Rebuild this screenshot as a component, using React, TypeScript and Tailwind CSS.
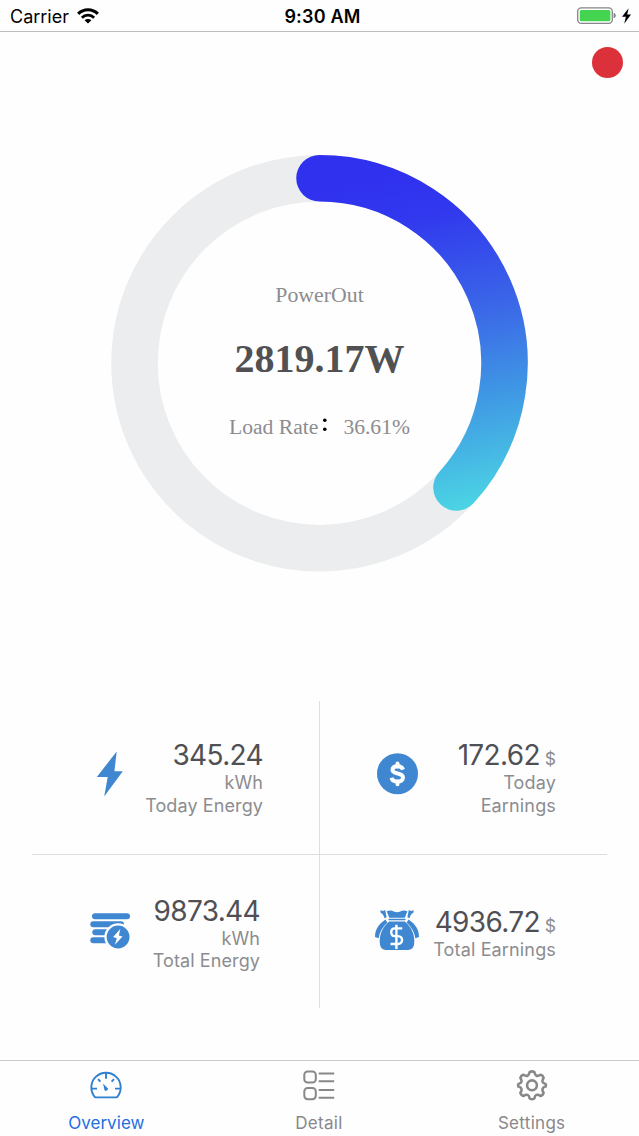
import React from "react";

const BLUE = "#3f87d0";

function WifiIcon() {
  return (
    <svg className="ml-[8px] mt-[8px] h-[16px] w-[22px]" viewBox="0 0 22 16" fill="none" stroke="#000" strokeWidth="3.2">
      <path d="M1.2 5.9A13.6 13.6 0 0 1 20.8 5.9" />
      <path d="M4.9 9.7A8.5 8.5 0 0 1 17.1 9.7" strokeWidth="2.9" />
      <path d="M11 15.6L7.6 12.3A4.8 4.8 0 0 1 14.4 12.3Z" fill="#000" stroke="none" />
    </svg>
  );
}

function BatteryIcon() {
  return (
    <svg className="mt-[6px] h-[20px] w-[56px]" viewBox="0 0 56 20">
      <rect x="1.7" y="1.8" width="34.6" height="15.6" rx="3.6" fill="#fff" stroke="#85858a" strokeWidth="1.3" />
      <rect x="3.8" y="3.9" width="30.6" height="11.4" rx="1.6" fill="#44d450" />
      <path d="M37.6 6.8c1.6.5 2.2 1.6 2.2 2.8s-.6 2.3-2.2 2.8z" fill="#85858a" />
      <path d="M52.6 2.2L46 10.8H49.9L48.2 17.8L55 8.6H51.2Z" fill="#000" />
    </svg>
  );
}

function StatusBar() {
  return (
    <header className="grid h-[32px] grid-cols-3 border-b border-[#bdbcc1] text-[18px] leading-[33px] text-black">
      <div className="flex pl-[10px]">
        <span>Carrier</span>
        <WifiIcon />
      </div>
      <div className="pl-[6px] text-center font-semibold tracking-[0.2px]">9:30 AM</div>
      <div className="flex justify-end pr-[7px]">
        <BatteryIcon />
      </div>
    </header>
  );
}

function Gauge() {
  return (
    <div className="mx-auto grid h-[418px] w-[417px]">
      <svg className="col-start-1 row-start-1 h-[418px] w-[417px]" viewBox="0 0 417 418" fill="none">
        <defs>
          <linearGradient id="power" gradientUnits="userSpaceOnUse" x1="190" y1="0" x2="262" y2="370">
            <stop offset="0.08" stopColor="#3030ef" />
            <stop offset="0.22" stopColor="#3138ee" />
            <stop offset="0.5" stopColor="#3b68e8" />
            <stop offset="0.72" stopColor="#3f97e4" />
            <stop offset="1" stopColor="#4bd3e4" />
          </linearGradient>
        </defs>
        <circle cx="208.5" cy="209.2" r="185" stroke="#ebedef" strokeWidth="46.5" />
        <path d="M208.5 24.2A185 185 0 0 1 345.5 333.5" stroke="url(#power)" strokeWidth="46.5" strokeLinecap="round" />
      </svg>
      <div className="col-start-1 row-start-1 flex flex-col items-center pt-[127px] font-['Liberation_Serif',serif] text-[#8c8c90]">
        <div className="h-[28px] text-[21.8px] leading-[28px]">PowerOut</div>
        <div className="mt-[25px] h-[50px] text-[40px] font-bold leading-[50px] text-[#515154]">2819.17W</div>
        <div className="mt-[29px] flex h-[28px] text-[21.6px] leading-[28px]">
          <span>Load Rate</span>
          <svg className="mx-[2px] h-[28px] w-[21px]" viewBox="0 0 21 28" fill="#000">
            <circle cx="4.8" cy="7.3" r="1.8" />
            <circle cx="4.8" cy="16.2" r="1.8" />
          </svg>
          <span>36.61%</span>
        </div>
      </div>
    </div>
  );
}

function BoltIcon() {
  return (
    <svg className="h-[46px] w-[28px]" viewBox="0 0 28 46" fill={BLUE}>
      <path d="M20.7 .5L.8 26H11.7L8.2 45.5L26.8 20.3H18.4Z" />
    </svg>
  );
}

function CoinIcon() {
  return (
    <svg className="h-[42px] w-[42px]" viewBox="0 0 42 42" fill="none">
      <circle cx="20.5" cy="20.7" r="20.5" fill={BLUE} />
      <g transform="translate(-0.5 0)">
        <path d="M26.5 16.6C25.9 14.4 23.9 13.2 21 13.2C17.9 13.2 16 14.6 16 16.8C16 22.2 26.5 18.9 26.5 24.6C26.5 27.1 24.3 28.6 21 28.6C17.8 28.6 15.6 27.2 15 24.8" stroke="#fff" strokeWidth="4" />
        <path d="M21 10.5V13.6M21 28.4V31.3" stroke="#fff" strokeWidth="4" strokeLinecap="round" />
      </g>
    </svg>
  );
}

function StackIcon() {
  return (
    <svg className="h-[38px] w-[42px]" viewBox="0 0 42 38" fill="none">
      <g stroke={BLUE} strokeWidth="6" strokeLinecap="round">
        <path d="M5 4.2H37" />
        <path d="M3.3 12.2H31" />
        <path d="M5.3 20.2H24" />
        <path d="M3.3 28.2H20" />
      </g>
      <circle cx="28.1" cy="25" r="12.6" fill={BLUE} stroke="#fefefe" strokeWidth="2.3" />
      <path d="M30.3 17.1L23.1 25.1L26.8 26.3L24.9 32.8L32.5 24.6L28.9 23.4Z" fill="#fff" />
    </svg>
  );
}

function BagIcon() {
  return (
    <svg className="h-[42px] w-[46px]" viewBox="0 0 46 42" fill="none">
      <path d="M11.5 10.5C4 15.5 1 21 1 28L4.7 29.2C5.5 23.4 8.2 18.7 13.3 13.6ZM34.5 10.5C42 15.5 45 21 45 28L41.3 29.2C40.5 23.4 37.8 18.7 32.7 13.6Z" fill={BLUE} />
      <path d="M6.3 1.2L9 2.1L11.2 1L12.6 8.2L10.5 9.3C9.7 6.3 8.6 4.5 6.7 4ZM39.7 1.2L37 2.1L34.8 1L33.4 8.2L35.5 9.3C36.3 6.3 37.4 4.5 39.3 4Z" fill={BLUE} />
      <path d="M12.7 2.2C15.7 1 17.7 1.2 19.8 2.4C22 3.5 24 3.5 26.3 2.4C28.4 1.2 30.5 1 33.4 2.2L30.8 8.7H15.3Z" fill={BLUE} />
      <path d="M15.2 10.5H30.8" stroke={BLUE} strokeWidth="1.5" strokeLinecap="round" />
      <path d="M15.2 12.4H30.8C36.5 17 40.3 24 40.3 32C40.3 38.8 38.2 41 32.5 41H13.5C7.8 41 5.7 38.8 5.7 32C5.7 24 9.5 17 15.2 12.4Z" fill={BLUE} />
      <path d="M28.2 19.4H20.8C16.1 19.4 16.1 27.1 20.8 27.1H24C29.4 27.1 29.4 35 24 35H16.5M22.4 15.7V40" stroke="#fff" strokeWidth="2.4" />
    </svg>
  );
}

function Value({ children }: { children: React.ReactNode }) {
  return <div className="h-[34px] whitespace-nowrap text-[28px] leading-[35px] tracking-[-0.65px] text-[#505054]">{children}</div>;
}

function Dollar() {
  return <span className="text-[17.5px] tracking-normal text-[#8c8c90]"> $</span>;
}

function Stats() {
  return (
    <section className="mx-[32px] grid h-[307px] grid-cols-[288px_287px] grid-rows-[154px_153px] text-[18px] leading-[22.5px] text-[#8c8c90]">
      <div className="flex justify-between border-b border-r border-[#dedee0] pl-[64px] pr-[56px]">
        <div className="pt-[50px]"><BoltIcon /></div>
        <div className="pt-[37px] text-right tracking-[0.1px]">
          <Value>345.24</Value>
          <div>kWh</div>
          <div>Today Energy</div>
        </div>
      </div>
      <div className="flex justify-between border-b border-[#dedee0] pl-[57px] pr-[51px]">
        <div className="pt-[52px]"><CoinIcon /></div>
        <div className="pt-[37px] text-right tracking-[0.15px]">
          <Value>172.62<Dollar /></Value>
          <div>Today</div>
          <div>Earnings</div>
        </div>
      </div>
      <div className="flex justify-between border-r border-[#dedee0] pl-[58px] pr-[59px]">
        <div className="pt-[57px]"><StackIcon /></div>
        <div className="pt-[38.5px] text-right tracking-[0.1px]">
          <Value>9873.44</Value>
          <div>kWh</div>
          <div>Total Energy</div>
        </div>
      </div>
      <div className="flex justify-between pl-[54px] pr-[51px]">
        <div className="pt-[54px]"><BagIcon /></div>
        <div className="pt-[50px] text-right tracking-[0.15px]">
          <Value>4936.72<Dollar /></Value>
          <div>Total Earnings</div>
        </div>
      </div>
    </section>
  );
}

function GaugeTabIcon() {
  return (
    <svg className="h-[34px] w-[34px]" viewBox="0 0 34 34" fill="none" stroke="#2f80d0" strokeWidth="1.9">
      <path d="M6.2 29.4A14.7 14.7 0 1 1 27.8 29.4Z" strokeLinejoin="round" />
      <path d="M17 5V10.8M9 11.2L11.4 13.7M25 11.2L22.6 13.7M2.8 20.6H8M31.2 20.6H26" />
      <path d="M14 15.4L19 20.5A2.2 2.2 0 0 1 15.6 22.4Z" fill="#2f80d0" stroke="none" />
    </svg>
  );
}

function ListTabIcon() {
  return (
    <svg className="h-[34px] w-[34px]" viewBox="0 0 34 34" fill="none" stroke="#88888b" strokeWidth="2">
      <rect x="2.3" y="3.4" width="11.5" height="11.2" rx="3.4" />
      <rect x="2.3" y="20" width="11.5" height="11.2" rx="3.4" />
      <path d="M16.7 5.4H32.2M16.7 13.2H32.2M16.7 22H32.2M16.7 29.8H32.2" />
    </svg>
  );
}

function GearTabIcon() {
  return (
    <svg className="h-[34px] w-[34px]" viewBox="0 0 34 34" fill="none" stroke="#88888b" strokeWidth="2.6" strokeLinejoin="round">
      <path d="M14.7 4.1Q17 2.6 19.3 4.1C20.1 8 22.2 8.9 25.4 6.7Q28.1 7.2 28.6 9.9C26.4 13.1 27.3 15.2 30.6 16Q31.6 17.3 30.6 18.6C27.3 19.4 26.4 21.5 28.6 24.7Q28.1 27.4 25.4 27.9C22.2 25.7 20.1 26.6 19.3 30.5Q17 32 14.7 30.5C13.9 26.6 11.8 25.7 8.6 27.9Q5.9 27.4 5.4 24.7C7.6 21.5 6.7 19.4 3.4 18.6Q2.4 17.3 3.4 16C6.7 15.2 7.6 13.1 5.4 9.9Q5.9 7.2 8.6 6.7C11.8 8.9 13.9 8 14.7 4.1Z" />
      <circle cx="17" cy="17.3" r="4.9" />
    </svg>
  );
}

function TabBar() {
  return (
    <nav className="grid h-[76px] grid-cols-3 border-t border-[#ccc8d0] pr-[1px] text-[17px] leading-[25px] tracking-[0.3px] text-[#88888b]">
      <div className="flex flex-col items-center pt-[7px] text-[#226fe2]">
        <GaugeTabIcon />
        <span className="mt-[9px] tracking-[0.05px]">Overview</span>
      </div>
      <div className="flex flex-col items-center pt-[7px]">
        <ListTabIcon />
        <span className="mt-[9px]">Detail</span>
      </div>
      <div className="flex flex-col items-center pt-[7px]">
        <GearTabIcon />
        <span className="mt-[9px]">Settings</span>
      </div>
    </nav>
  );
}

export default function App() {
  return (
    <div className="flex h-[1136px] w-[639px] flex-col overflow-hidden bg-[#fefefe] font-['Inter',sans-serif]">
      <StatusBar />
      <div className="flex h-[122px] justify-end pr-[16px] pt-[15px]">
        <div className="h-[31px] w-[31px] rounded-full bg-[#dc303a]" />
      </div>
      <Gauge />
      <div className="h-[129px]" />
      <Stats />
      <div className="grow" />
      <TabBar />
    </div>
  );
}
